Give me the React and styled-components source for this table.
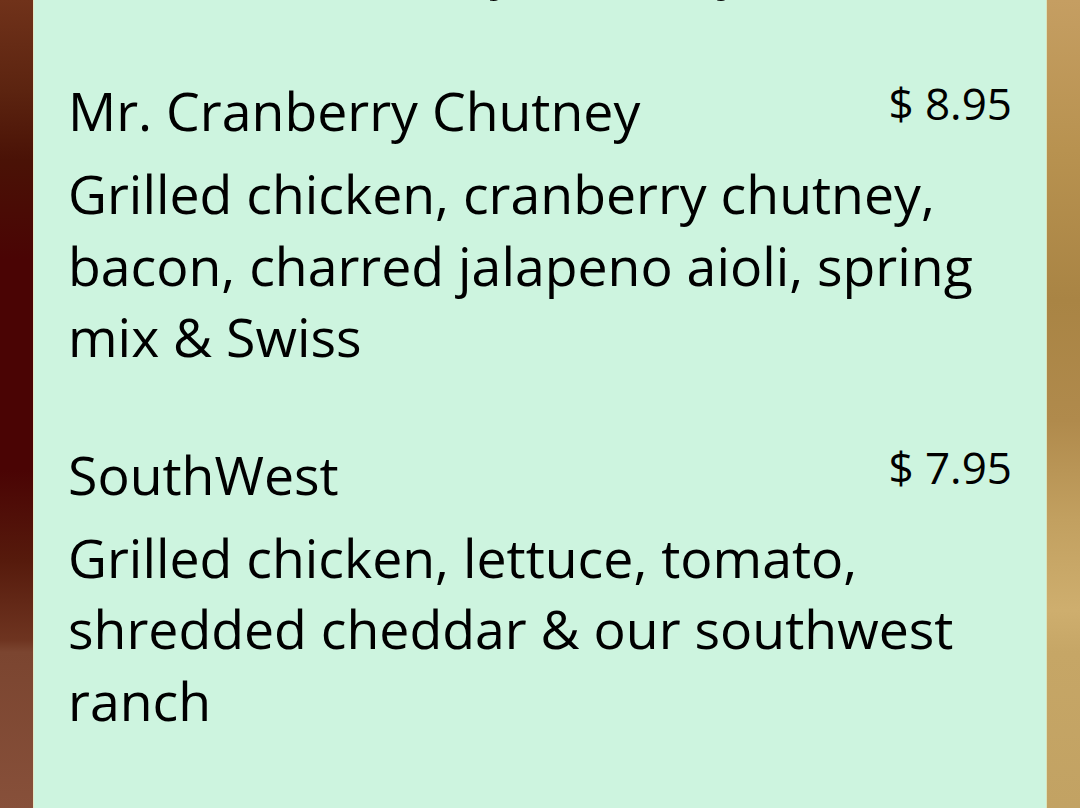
import React from "react";
import styled, { createGlobalStyle } from "styled-components";

const GlobalStyle = createGlobalStyle`
  html, body {
    margin: 0;
    padding: 0;
    height: 808px;
    overflow: hidden;
  }
  body {
    font-family: "Open Sans", "Noto Sans", sans-serif;
    color: #000;
  }
`;

const Page = styled.div`
  display: flex;
  height: 808px;
`;

const SideStrip = styled.div`
  width: ${props => props.width};
  flex: none;
  background: ${props => props.background};
`;

const Panel = styled.div`
  flex: 1;
  display: flex;
  flex-direction: column;
  background: #cdf4df;
  border-left: 1px solid #e3e6c4;
  border-right: 1px solid #d8e4bc;
  padding: 0 34px 0 34px;
  overflow: hidden;
`;

const Heading = styled.h2`
  margin: -65px 0 0;
  height: 68px;
  font-size: 52px;
  font-weight: 400;
  line-height: 68px;
  text-align: center;
  white-space: nowrap;
  padding-left: 14px;
`;

const Item = styled.div`
  display: flex;
  flex-direction: column;
  margin-top: ${props => props.gap};
`;

const ItemHead = styled.div`
  display: flex;
  justify-content: space-between;
  align-items: flex-start;
`;

const ItemName = styled.div`
  font-size: 53.6px;
  line-height: 72px;
`;

const Price = styled.div`
  font-size: 44px;
  line-height: 56px;
  white-space: nowrap;
`;

const Description = styled.div`
  margin-top: 11px;
  font-size: 53.6px;
  line-height: 71.5px;
`;

const items = [
  {
    name: "Mr. Cranberry Chutney",
    price: "$ 8.95",
    desc: "Grilled chicken, cranberry chutney, bacon, charred jalapeno aioli, spring mix & Swiss"
  },
  {
    name: "SouthWest",
    price: "$ 7.95",
    desc: "Grilled chicken, lettuce, tomato, shredded cheddar & our southwest ranch"
  }
];

const App = () => (
  <Page>
    <GlobalStyle />
    <SideStrip
      width="33px"
      background="linear-gradient(to bottom, #70321a 0px, #5c2410 90px, #4a1206 160px, #4a0404 260px, #4a0404 470px, #561a0c 560px, #6e3420 640px, #7b4530 652px, #87503a 808px)"
    />
    <Panel>
      <Heading>Turkey &amp; Hearty</Heading>
      {items.map((item, index) => (
        <Item key={index} gap={index === 0 ? "72px" : "66px"}>
          <ItemHead>
            <ItemName>{item.name}</ItemName>
            <Price>{item.price}</Price>
          </ItemHead>
          <Description>{item.desc}</Description>
        </Item>
      ))}
    </Panel>
    <SideStrip
      width="33px"
      background="linear-gradient(to bottom, #c59e62 0px, #b89250 150px, #a98444 300px, #b08a4c 420px, #c2a060 520px, #ceae6e 610px, #c6a666 653px, #c2a263 808px)"
    />
  </Page>
);

export default App;
